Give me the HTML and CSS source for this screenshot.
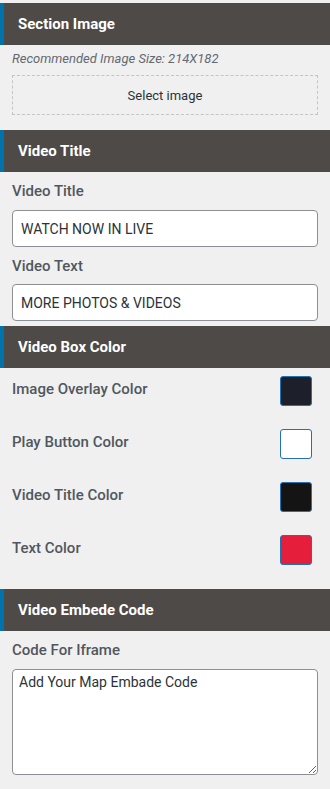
FILE: index.html
```html
<!DOCTYPE html>
<html lang="en">
<head>
  <meta charset="UTF-8" />
  <meta name="viewport" content="width=device-width, initial-scale=1.0"/>
  <title>Video Box Settings</title>
  <link rel="stylesheet" href="styles.css">
</head>
<body>

  <!-- Section image -->
  <div class="panel-head">Section Image</div>
  <div class="panel-body image-body">
    <div class="hint">Recommended Image Size: 214X182</div>
    <div class="select-image">Select image</div>
  </div>

  <!-- Video title -->
  <div class="panel-head">Video Title</div>
  <div class="panel-body text-body">
    <label class="field-label">Video Title</label>
    <input type="text" class="field" value="WATCH NOW IN LIVE">
    <label class="field-label">Video Text</label>
    <input type="text" class="field" value="MORE PHOTOS &amp; VIDEOS">
  </div>

  <!-- Colors -->
  <div class="panel-head">Video Box Color</div>
  <div class="panel-body color-body">
    <div class="color-row">
      <span class="field-label">Image Overlay Color</span>
      <span class="swatch" style="background:#1d202b"></span>
    </div>
    <div class="color-row">
      <span class="field-label">Play Button Color</span>
      <span class="swatch" style="background:#ffffff"></span>
    </div>
    <div class="color-row">
      <span class="field-label">Video Title Color</span>
      <span class="swatch" style="background:#141414"></span>
    </div>
    <div class="color-row">
      <span class="field-label">Text Color</span>
      <span class="swatch" style="background:#e41e3b"></span>
    </div>
  </div>

  <!-- Embed code -->
  <div class="panel-head">Video Embede Code</div>
  <div class="panel-body code-body">
    <label class="field-label">Code For Iframe</label>
    <textarea class="code-area">Add Your Map Embade Code</textarea>
  </div>

</body>
</html>
```

FILE: styles.css
```css
body {
  margin: 0;
  padding-top: 3px;
  background: #f0f0f0;
  font-family: Roboto, "Liberation Sans", sans-serif;
  color: #50575e;
}

.panel-head {
  height: 42px;
  display: flex;
  align-items: center;
  padding-left: 14px;
  border-left: 4px solid #0073aa;
  background: #4e4a47;
  color: #fff;
  font-size: 15px;
  font-weight: bold;
}

.panel-body {
  padding: 0 12px;
}

.image-body {
  padding-top: 6px;
  padding-bottom: 15px;
}

.hint {
  font-size: 13px;
  line-height: 16px;
  font-style: italic;
  color: #646970;
}

.select-image {
  margin-top: 8px;
  height: 38px;
  border: 1px dashed #c3c4c7;
  display: flex;
  align-items: center;
  justify-content: center;
  font-size: 13px;
  color: #2c3338;
}

.field-label {
  display: block;
  font-size: 15px;
  line-height: 20px;
  font-weight: 500;
  color: #50575e;
}

.text-body {
  padding-top: 9px;
  padding-bottom: 5px;
}

.field {
  display: block;
  box-sizing: border-box;
  width: 100%;
  height: 37px;
  margin: 9px 0;
  padding: 0 8px;
  border: 1px solid #8c8f94;
  border-radius: 4px;
  background: #fff;
  font-family: inherit;
  font-size: 14px;
  color: #2c3338;
}

.field:last-child {
  margin-bottom: 0;
  margin-top: 8px;
}

.color-body {
  padding-top: 8px;
  padding-bottom: 24px;
  display: flex;
  flex-direction: column;
  gap: 23px;
}

.color-row {
  display: flex;
  align-items: center;
  justify-content: space-between;
  height: 30px;
  padding-right: 6px;
}

.color-row .field-label {
  margin-top: -4px;
}

.swatch {
  box-sizing: border-box;
  width: 32px;
  height: 30px;
  border: 1px solid #2271b1;
  border-radius: 3px;
}

.code-body {
  padding-top: 9px;
}

.code-area {
  display: block;
  box-sizing: border-box;
  width: 100%;
  height: 106px;
  margin-top: 9px;
  padding: 4px 6px;
  border: 1px solid #8c8f94;
  border-radius: 4px;
  background: #fff;
  font-family: inherit;
  font-size: 14px;
  color: #2c3338;
}
```
